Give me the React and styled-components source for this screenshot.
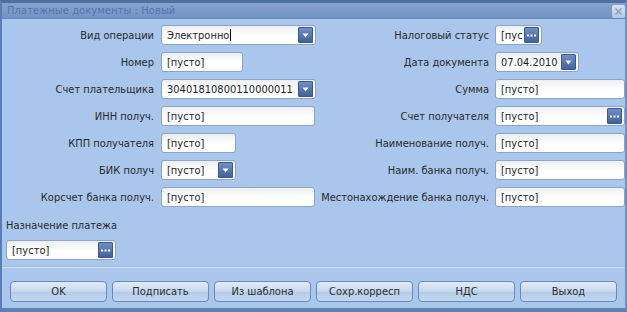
import React from 'react'
import styled, { createGlobalStyle } from 'styled-components'

const GlobalStyle = createGlobalStyle`
  html, body {
    margin: 0;
    padding: 0;
    background: #ffffff;
  }
  body {
    font-family: "DejaVu Sans Condensed", "DejaVu Sans", Verdana, sans-serif;
    font-stretch: condensed;
    font-size: 11px;
    color: #262626;
  }
`

const Window = styled.div`
  width: 627px;
  height: 312px;
  box-sizing: border-box;
  display: flex;
  flex-direction: column;
  background: #a9c6ec;
  border-top: 3px solid #4f6f9f;
  border-left: 2px solid #5b7db3;
  border-right: 2px solid #6f90c2;
  border-bottom: 4px solid #5f80b3;
  overflow: hidden;
`

const TitleBar = styled.div`
  height: 16px;
  flex: none;
  display: flex;
  align-items: center;
  justify-content: space-between;
  padding: 0 0 0 5px;
  background: linear-gradient(#86a3d0, #7193c5);
  border-bottom: 1px solid #6787ba;
  box-sizing: border-box;
`

const Title = styled.span`
  color: #5475ab;
  font-size: 11px;
  letter-spacing: 0.1px;
`

const CloseButton = styled.div`
  width: 13px;
  height: 13px;
  margin-top: 1px;
  border-radius: 2px;
  background: linear-gradient(#d5e2f3, #b4c9e6);
  display: flex;
  align-items: center;
  justify-content: center;
  svg {
    display: block;
  }
`

const Body = styled.div`
  flex: 1;
  display: flex;
  flex-direction: column;
  padding-top: 6px;
`

const FormGrid = styled.div`
  display: grid;
  grid-template-columns: 159px 155px 179px 130px;
  grid-auto-rows: 20px;
  row-gap: 7px;
`

const Label = styled.div`
  display: flex;
  align-items: center;
  justify-content: flex-end;
  padding-right: ${p => p.$gap || 7}px;
  white-space: nowrap;
  color: #2a2a2a;
`

const Field = styled.div`
  width: ${p => p.$w}px;
  height: 20px;
  box-sizing: border-box;
  display: flex;
  align-items: center;
  padding: 0 2px 0 5px;
  border: 1px solid #8fa3c2;
  border-radius: 3px;
  background: linear-gradient(#eceef1, #ffffff 55%);
  overflow: hidden;
  color: #1f1f1f;
`

const Value = styled.span`
  flex: 1;
  min-width: 0;
  white-space: nowrap;
  overflow: hidden;
`

const Caret = styled.span`
  display: inline-block;
  width: 1px;
  height: 12px;
  margin-left: 1px;
  vertical-align: -2px;
  background: #000;
`

const IconButton = styled.div`
  flex: none;
  width: 15px;
  height: 16px;
  border-radius: 2px;
  background: linear-gradient(#7193c7, #3d5f99);
  box-shadow: inset 0 0 0 1px #39598e;
  display: flex;
  align-items: center;
  justify-content: center;
  svg {
    display: block;
  }
`

const Purpose = styled.div`
  margin: 12px 0 0 4px;
`

const PurposeLabel = styled.div`
  height: 14px;
  line-height: 14px;
  color: #2a2a2a;
`

const PurposeField = styled.div`
  margin-top: 7px;
`

const Separator = styled.div`
  margin-top: 7px;
  height: 1px;
  background: #d2e1f4;
  box-shadow: 0 -1px 0 #9bb8df;
`

const ButtonBar = styled.div`
  margin-top: 13px;
  padding-left: 8px;
  display: flex;
  gap: 5px;
`

const Button = styled.div`
  width: 97px;
  height: 21px;
  box-sizing: border-box;
  display: flex;
  align-items: center;
  justify-content: center;
  border: 1px solid #6c88b6;
  border-radius: 4px;
  background: linear-gradient(#e3ecf8, #c4d7ef 50%, #b3cbea 51%, #c3d7f0);
  color: #2c2c2c;
  font-size: 11px;
`

const ArrowIcon = () => (
  <svg width="7" height="5" viewBox="0 0 7 5">
    <path d="M0.5 0.5 H6.5 L3.5 4.5 Z" fill="#ffffff" />
  </svg>
)

const DotsIcon = () => (
  <svg width="9" height="3" viewBox="0 0 9 3">
    <rect x="0" y="0.5" width="2" height="2" fill="#ffffff" />
    <rect x="3.5" y="0.5" width="2" height="2" fill="#ffffff" />
    <rect x="7" y="0.5" width="2" height="2" fill="#ffffff" />
  </svg>
)

const Input = ({ w, value, kind, caret }) => (
  <Field $w={w}>
    <Value>
      {value}
      {caret && <Caret />}
    </Value>
    {kind === 'arrow' && (
      <IconButton>
        <ArrowIcon />
      </IconButton>
    )}
    {kind === 'dots' && (
      <IconButton>
        <DotsIcon />
      </IconButton>
    )}
  </Field>
)

const EMPTY = '[пусто]'

const rows = [
  {
    left: { label: 'Вид операции', w: 155, value: 'Электронно', kind: 'arrow', caret: true },
    right: { label: 'Налоговый статус', w: 47, value: '[пус', kind: 'dots' },
  },
  {
    left: { label: 'Номер', w: 82, value: EMPTY },
    right: { label: 'Дата документа', w: 84, value: '07.04.2010', kind: 'arrow' },
  },
  {
    left: { label: 'Счет плательщика', w: 155, value: '30401810800110000011', kind: 'arrow' },
    right: { label: 'Сумма', w: 130, value: EMPTY },
  },
  {
    left: { label: 'ИНН получ.', w: 154, value: EMPTY },
    right: { label: 'Счет получателя', w: 130, value: EMPTY, kind: 'dots' },
  },
  {
    left: { label: 'КПП получателя', w: 75, value: EMPTY },
    right: { label: 'Наименование получ.', w: 130, value: EMPTY },
  },
  {
    left: { label: 'БИК получ', w: 75, value: EMPTY, kind: 'arrow' },
    right: { label: 'Наим. банка получ.', w: 130, value: EMPTY },
  },
  {
    left: { label: 'Корсчет банка получ.', w: 154, value: EMPTY },
    right: { label: 'Местонахождение банка получ.', w: 130, value: EMPTY },
  },
]

const buttons = ['OK', 'Подписать', 'Из шаблона', 'Сохр.корресп', 'НДС', 'Выход']

const App = () => {
  return (
    <React.Fragment>
      <GlobalStyle />
      <Window>
        <TitleBar>
          <Title>Платежные документы : Новый</Title>
          <CloseButton>
            <svg width="9" height="9" viewBox="0 0 9 9">
              <path d="M1.5 1.5 L7.5 7.5 M7.5 1.5 L1.5 7.5" stroke="#8fa2bd" strokeWidth="1.6" />
            </svg>
          </CloseButton>
        </TitleBar>
        <Body>
          <FormGrid>
            {rows.map((r, i) => (
              <React.Fragment key={i}>
                <Label>{r.left.label}</Label>
                <Input {...r.left} />
                <Label $gap={6}>{r.right.label}</Label>
                <Input {...r.right} />
              </React.Fragment>
            ))}
          </FormGrid>
          <Purpose>
            <PurposeLabel>Назначение платежа</PurposeLabel>
            <PurposeField>
              <Input w={110} value={EMPTY} kind="dots" />
            </PurposeField>
          </Purpose>
          <Separator />
          <ButtonBar>
            {buttons.map(b => (
              <Button key={b}>{b}</Button>
            ))}
          </ButtonBar>
        </Body>
      </Window>
    </React.Fragment>
  )
}

export default App
